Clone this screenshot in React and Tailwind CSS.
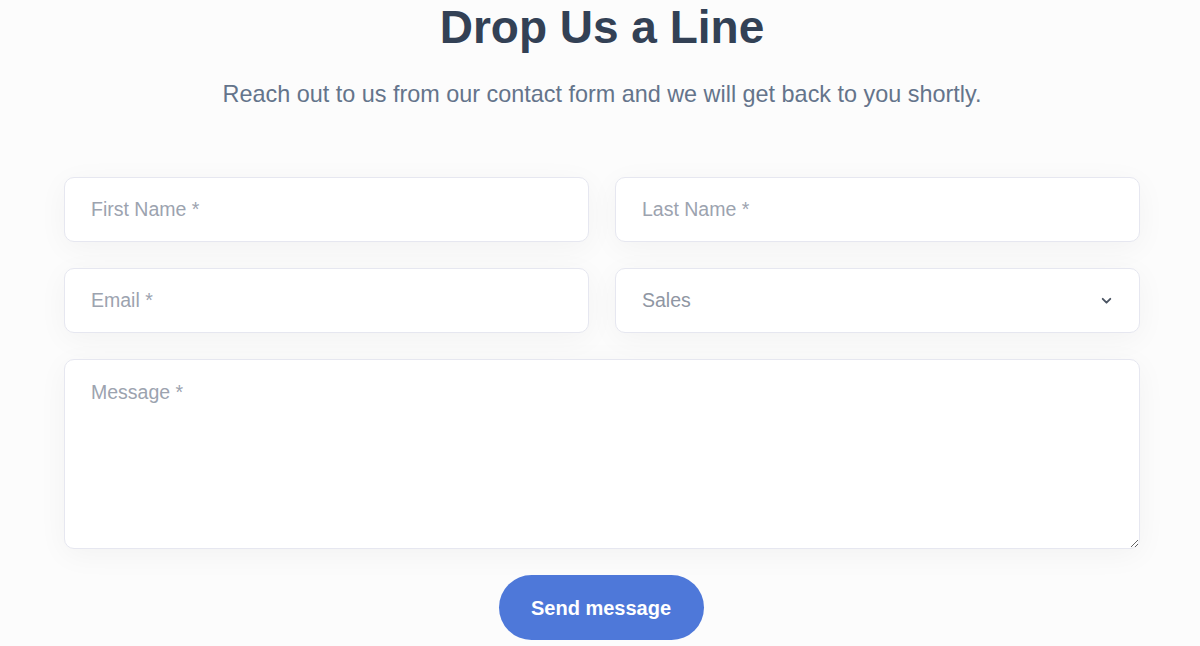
import React from "react";

const base =
  "w-full rounded-[10px] border border-[#e6e7f0] bg-white px-[26px] text-[19.5px] shadow-[0_6px_30px_rgba(0,0,0,0.045)] outline-none";
const field = base + " h-[65px] text-[#374151] placeholder:text-[#9ca3af]";

export default function App() {
  return (
    <div
      className="min-h-[646px] bg-[#fcfcfc] flex flex-col items-center pl-[4px]"
      style={{ fontFamily: '"Liberation Sans", Arial, sans-serif' }}
    >
      <h1 className="mt-[1px] text-[46px] leading-[52px] font-bold text-[#334155]">
        Drop Us a Line
      </h1>
      <p className="mt-[27px] text-[23.4px] leading-[28px] text-[#64748b]">
        Reach out to us from our contact form and we will get back to you shortly.
      </p>
      <form className="mt-[69px] w-[1076px] flex flex-col gap-[26px]">
        <div className="grid grid-cols-2 gap-[26px]">
          <input className={field} placeholder="First Name *" />
          <input className={field} placeholder="Last Name *" />
        </div>
        <div className="grid grid-cols-2 gap-[26px]">
          <input className={field} placeholder="Email *" />
          <div className="relative">
            <div className={base + " h-[65px] flex items-center text-[#8f96a3]"}>Sales</div>
            <svg
              className="absolute right-[27px] top-[26px]"
              width="13"
              height="13"
              viewBox="0 0 24 24"
              fill="none"
              stroke="#4b5563"
              strokeWidth="3.5"
              strokeLinecap="round"
              strokeLinejoin="round"
            >
              <path d="M5 9l7 7 7-7" />
            </svg>
          </div>
        </div>
        <textarea
          className={base + " h-[190px] py-[18px] text-[#374151] placeholder:text-[#9ca3af]"}
          placeholder="Message *"
        />
        <div className="flex justify-center">
          <button
            type="button"
            className="w-[205px] h-[65px] rounded-full bg-[#4e78d9] text-white text-[20px] font-bold -ml-[2px]"
          >
            Send message
          </button>
        </div>
      </form>
    </div>
  );
}
